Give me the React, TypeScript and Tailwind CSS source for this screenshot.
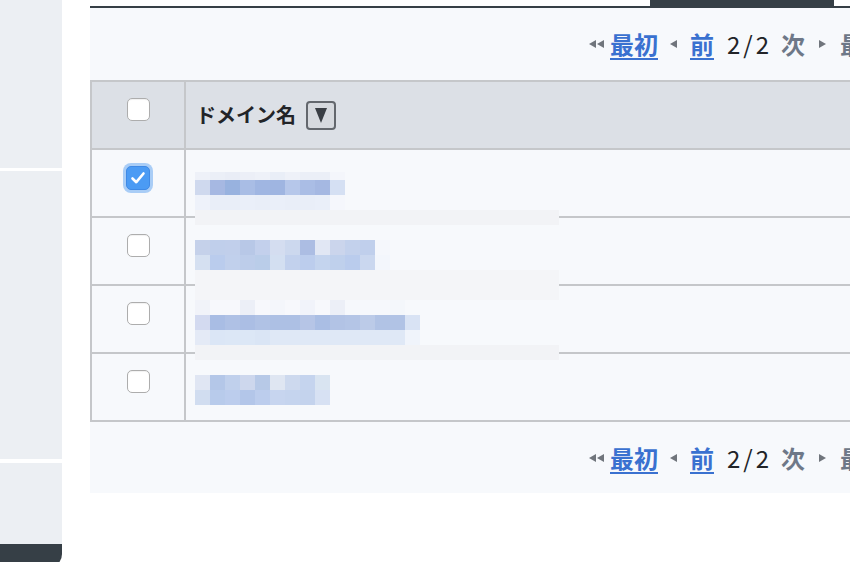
import React from "react";

type MRow = { h: number; cells: string[] };
type Mosaic = { top: number; rows: MRow[] };

const MOSAICS: Mosaic[] = [
  {
    top: 172,
    rows: [
      { h: 8, cells: ["#eef1f8", "#ebeff7", "#e9edf6", "#eceff7", "#eef1f8", "#e9eef7", "#eef1f8", "#ebeff7", "#ebeff7", "#f4f6fb"] },
      { h: 15, cells: ["#cfd9ee", "#a6b8e2", "#98b2df", "#a9bde5", "#a0b6e2", "#9fb5e1", "#b6c7ea", "#aabde5", "#a5b8e2", "#d5e0f3"] },
      { h: 15, cells: ["#eef2fa", "#e9eef8", "#e9eef8", "#eaeff9", "#e9eef8", "#eaeff9", "#e9eef8", "#e9eef8", "#eaeff9", "#f5f7fc"] },
    ],
  },
  {
    top: 240,
    rows: [
      { h: 15, cells: ["#c5d1ea", "#c0cfeb", "#c1cfeb", "#b8c8e7", "#c3d0ec", "#d4ddf0", "#ccd8ee", "#acbde3", "#e1e7f4", "#cbd5ec", "#c3d1ec", "#c0cfec", "#f5f7fc"] },
      { h: 15, cells: ["#d5e0f1", "#bacced", "#c1d0ec", "#bdcdea", "#bacde9", "#d3dff1", "#c2d1ed", "#bccded", "#c4d4ee", "#bfd0ec", "#bacced", "#cad7ef", "#f3f6fc"] },
    ],
  },
  {
    top: 300,
    rows: [
      { h: 15, cells: ["#f1f3f9", "#f7f8fc", "#f7f8fc", "#eceff7", "#f7f8fc", "#f4f6fb", "#f7f8fc", "#f1f3fa", "#f7f8fc", "#eceff7", "#f6f8fc", "#f6f8fc", "#f6f8fc", "#f4f7fb"] },
      { h: 15, cells: ["#d3daf0", "#a9bde4", "#afc1e5", "#abbee4", "#b0c2e5", "#adc0e4", "#adc0e4", "#b6c5e6", "#aabee4", "#b2c3e5", "#b4c5e6", "#bccbe8", "#b1c3e5", "#b1c3e5", "#d9e3f4"] },
      { h: 15, cells: ["#e4eaf6", "#dbe6f6", "#dce7f6", "#dce7f6", "#dae5f5", "#dfe8f6", "#dfe8f6", "#dfe8f6", "#dfe8f6", "#dfe8f6", "#dfe8f6", "#dfe8f6", "#dfe8f6", "#dfe8f6", "#f0f4fb"] },
    ],
  },
  {
    top: 375,
    rows: [
      { h: 15, cells: ["#e0e6f3", "#b4c7e8", "#c0d0ec", "#cdd7ed", "#b7c9e7", "#dfe6f2", "#cdd9ee", "#c5d4ee", "#d9e4f1"] },
      { h: 15, cells: ["#d1ddf0", "#b8cbeb", "#bccded", "#b3c6e9", "#bccded", "#c7d5ef", "#c5d4ee", "#c4d3ed", "#d7e1f3"] },
    ],
  },
];

const BANDS = [
  { top: 210, h: 15, color: "#f2f3f6" },
  { top: 270, h: 30, color: "#f4f5f8" },
  { top: 345, h: 15, color: "#f2f3f6" },
];

function Checkbox({ checked }: { checked?: boolean }) {
  if (checked) {
    return (
      <div className="w-[24px] h-[24px] rounded-[5px] bg-[#4b9bf4] border border-[#3f8ae6] shadow-[0_0_0_3px_#a9cdf6] flex items-center justify-center">
        <svg width="20" height="20" viewBox="0 0 20 20">
          <path d="M4.5 10.5 L8.3 14.2 L15.5 5.5" fill="none" stroke="white" strokeWidth="2.6" strokeLinecap="round" strokeLinejoin="round" />
        </svg>
      </div>
    );
  }
  return <div className="w-[23px] h-[23px] rounded-[5px] bg-white border border-[#adadad] shadow-[inset_0_1px_1px_rgba(0,0,0,0.06)]" />;
}

function TriLeft({ double }: { double?: boolean }) {
  if (double) {
    return (
      <svg width="15" height="8" viewBox="0 0 15 8" className="shrink-0">
        <polygon points="7,0 0,4 7,8" fill="#70757c" />
        <polygon points="15,0 8,4 15,8" fill="#70757c" />
      </svg>
    );
  }
  return (
    <svg width="7" height="8" viewBox="0 0 7 8" className="shrink-0">
      <polygon points="7,0 0,4 7,8" fill="#70757c" />
    </svg>
  );
}

function TriRight({ double }: { double?: boolean }) {
  if (double) {
    return (
      <svg width="15" height="8" viewBox="0 0 15 8" className="shrink-0">
        <polygon points="0,0 7,4 0,8" fill="#70757c" />
        <polygon points="8,0 15,4 8,8" fill="#70757c" />
      </svg>
    );
  }
  return (
    <svg width="7" height="8" viewBox="0 0 7 8" className="shrink-0">
      <polygon points="0,0 7,4 0,8" fill="#70757c" />
    </svg>
  );
}

function Pagination({ h }: { h: string }) {
  return (
    <div className={`${h} flex items-center pl-[499px] whitespace-nowrap text-[24px] leading-none`}>
      <TriLeft double />
      <a className="ml-[6px] font-bold text-[#3a71d0] underline decoration-[2px] underline-offset-[4px]">最初</a>
      <span className="ml-[12px]"><TriLeft /></span>
      <a className="ml-[13px] font-bold text-[#3a71d0] underline decoration-[2px] underline-offset-[4px]">前</a>
      <span className="ml-[13px] text-[#222428] tracking-[3px]">2/2</span>
      <span className="ml-[9px] font-bold text-[#6e7888]">次</span>
      <span className="ml-[14px]"><TriRight /></span>
      <span className="ml-[14px] font-bold text-[#6e7888]">最後</span>
      <span className="ml-[8px]"><TriRight double /></span>
    </div>
  );
}

function Row({ checked }: { checked?: boolean }) {
  return (
    <div className="grid grid-cols-[94px_1fr] h-[68px] border-b-2 border-[#c5c7ca]">
      <div className="border-r-2 border-[#c5c7ca] flex justify-center pt-[16px]">
        <Checkbox checked={checked} />
      </div>
      <div />
    </div>
  );
}

export default function App() {
  return (
    <div className="w-[850px] h-[562px] overflow-hidden bg-white flex font-['Noto_Sans_CJK_JP','Noto_Sans',sans-serif]">
      <aside className="w-[62px] shrink-0 flex flex-col">
        <div className="h-[168px] shrink-0 bg-[#eceff3]" />
        <div className="h-[288px] shrink-0 mt-[3px] bg-[#eceff3]" />
        <div className="h-[81px] shrink-0 mt-[4px] bg-[#eceff3]" />
        <div className="h-[24px] shrink-0 bg-[#363f46] rounded-br-[14px]" />
      </aside>

      <main className="relative ml-[28px] w-[800px] shrink-0 flex flex-col">
        <div className="h-[6px] flex">
          <div className="w-[560px]" />
          <div className="w-[184px] bg-[#363f46]" />
        </div>
        <div className="h-[2px] bg-[#363f46]" />

        <div className="bg-[#f7f9fc] h-[485px] flex flex-col">
          <Pagination h="h-[72px]" />

          <div className="border-t-2 border-l-2 border-[#c5c7ca]">
            <div className="grid grid-cols-[94px_1fr] h-[68px] border-b-2 border-[#c5c7ca] bg-[#dce0e6]">
              <div className="border-r-2 border-[#c5c7ca] flex justify-center pt-[16px]">
                <Checkbox />
              </div>
              <div className="flex items-center pl-[10px] gap-[10px]">
                <span className="text-[20px] font-bold text-[#222428] leading-none">ドメイン名</span>
                <button className="w-[30px] h-[29px] rounded-[4px] border-2 border-[#63676d] bg-[#d6d9de] flex items-center justify-center">
                  <svg width="12" height="15" viewBox="0 0 12 15">
                    <polygon points="0,0 12,0 6,15" fill="#3a3e44" />
                  </svg>
                </button>
              </div>
            </div>
            <Row checked />
            <Row />
            <Row />
            <Row />
          </div>

          <Pagination h="h-[71px]" />
        </div>

        {MOSAICS.map((m, i) => (
          <div key={i} className="absolute left-[105px] flex flex-col" style={{ top: m.top }}>
            {m.rows.map((r, j) => (
              <div key={j} className="flex">
                {r.cells.map((c, k) => (
                  <div key={k} className="w-[15px]" style={{ height: r.h, backgroundColor: c }} />
                ))}
              </div>
            ))}
          </div>
        ))}
        {BANDS.map((b, i) => (
          <div key={i} className="absolute left-[105px] w-[364px]" style={{ top: b.top, height: b.h, backgroundColor: b.color }} />
        ))}
      </main>
    </div>
  );
}
